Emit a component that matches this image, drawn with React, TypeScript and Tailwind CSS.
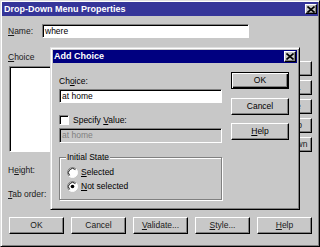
import React from "react";

const raised =
  "bg-[#c8c8c8] border border-t-white border-l-white border-r-black border-b-black shadow-[inset_-1px_-1px_0_#808080]";
const sunken =
  "border border-t-[#808080] border-l-[#808080] border-r-white border-b-white shadow-[inset_1px_1px_0_#000]";

function CloseX() {
  return (
    <svg width="8" height="7" viewBox="0 0 8 7">
      <path d="M0.5 0.5 L7.5 6.5 M7.5 0.5 L0.5 6.5" stroke="#000" strokeWidth="1.6" fill="none" />
    </svg>
  );
}

function Radio({ checked }: { checked?: boolean }) {
  return (
    <svg width="11" height="11" viewBox="0 0 12 12" className="shrink-0">
      <circle cx="6" cy="6" r="5.5" fill="#fff" />
      <path d="M2.11 9.89 A5.5 5.5 0 0 1 9.89 2.11" stroke="#808080" fill="none" />
      <path d="M9.89 2.11 A5.5 5.5 0 0 1 2.11 9.89" stroke="#fff" fill="none" />
      <path d="M2.82 9.18 A4.5 4.5 0 0 1 9.18 2.82" stroke="#000" fill="none" />
      {checked && <circle cx="6" cy="6" r="2" fill="#000" />}
    </svg>
  );
}

function Btn({ children, className = "" }: { children?: React.ReactNode; className?: string }) {
  return (
    <div className={`${raised} flex items-center justify-center text-[8.5px] leading-none whitespace-nowrap text-[#1a1a1a] ${className}`}>
      {children}
    </div>
  );
}

export default function App() {
  return (
    <div className="relative w-[320px] h-[247px] overflow-hidden font-['Liberation_Sans',Arial,sans-serif] text-black">
      {/* Outer window */}
      <div className="w-[320px] h-[247px] flex flex-col bg-[#c8c8c8] border border-t-[#dfdfdf] border-l-[#dfdfdf] border-r-black border-b-black shadow-[inset_1px_1px_0_#fff,inset_-1px_-1px_0_#808080] p-px">
        <div className="h-[14px] bg-[#353599] flex items-center justify-between pl-[2px] pr-[1px] shrink-0">
          <span className="text-white font-bold text-[9px] leading-none">Drop-Down Menu Properties</span>
          <div className={`${raised} w-[12px] h-[10px] flex items-center justify-center`}>
            <CloseX />
          </div>
        </div>
        <div className="flex flex-col px-[6px]">
          <div className="mt-[8px] flex items-center h-[14px]">
            <span className="w-[34px] text-[8.5px] leading-none text-[#1a1a1a]">
              <u>N</u>ame:
            </span>
            <div className={`${sunken} bg-white w-[207px] h-[14px] flex items-center pl-[2px] text-[8.5px] leading-none`}>
              where
            </div>
          </div>
          <div className="mt-[14px] flex h-[100px]">
            <div className="flex flex-col w-[240px]">
              <span className="h-[10px] text-[8.5px] leading-[10px] text-[#1a1a1a]">
                <u>C</u>hoice
              </span>
              <div className={`${sunken} bg-white mt-[4px] ml-px h-[86px]`} />
            </div>
            <div className="ml-auto pt-[9px] flex flex-col gap-[4px]">
              <Btn className="w-[54px] h-[15.5px]">Add...</Btn>
              <Btn className="w-[54px] h-[15.5px]">Modify...</Btn>
              <Btn className="w-[54px] h-[15.5px]">Remove</Btn>
              <Btn className="w-[54px] h-[15.5px]">Move Up</Btn>
              <Btn className="w-[54px] h-[15.5px]">Move Down</Btn>
            </div>
          </div>
          <div className="mt-[13px] h-[10px] flex items-center">
            <span className="text-[8.5px] leading-none text-[#1a1a1a]">
              H<u>e</u>ight:
            </span>
          </div>
          <div className="mt-[14px] h-[10px] flex items-center">
            <span className="text-[8.5px] leading-none text-[#1a1a1a]">
              <u>T</u>ab order:
            </span>
          </div>
          <div className="mt-[18px] flex gap-[7px] pl-px">
            <Btn className="w-[55px] h-[17px]">OK</Btn>
            <Btn className="w-[55px] h-[17px]">Cancel</Btn>
            <Btn className="w-[55px] h-[17px]">
              <span>
                <u>V</u>alidate...
              </span>
            </Btn>
            <Btn className="w-[55px] h-[17px]">
              <span>
                <u>S</u>tyle...
              </span>
            </Btn>
            <Btn className="w-[55px] h-[17px]">
              <span>
                <u>H</u>elp
              </span>
            </Btn>
          </div>
        </div>
      </div>

      {/* Add Choice dialog overlay */}
      <div className="absolute left-[50px] top-[47px] w-[250px] h-[163px] flex flex-col bg-[#c8c8c8] border border-t-[#dfdfdf] border-l-[#dfdfdf] border-r-black border-b-black shadow-[inset_1px_1px_0_#fff,inset_-1px_-1px_0_#808080] p-[2px]">
        <div className="h-[13px] bg-[#000080] flex items-center justify-between pl-px pr-px shrink-0">
          <span className="text-white font-bold text-[9px] leading-none">Add Choice</span>
          <div className={`${raised} w-[12px] h-[11px] flex items-center justify-center`}>
            <CloseX />
          </div>
        </div>
        <div className="flex pl-[6px]">
          <div className="flex flex-col w-[163px] pt-[13px]">
            <span className="h-[10px] text-[8.5px] leading-[10px]">
              Ch<u>o</u>ice:
            </span>
            <div className={`${sunken} bg-white mt-[3px] h-[14px] flex items-center pl-[2px] text-[8.5px] leading-none`}>
              at home
            </div>
            <div className="mt-[12px] h-[10px] flex items-center gap-[4px]">
              <div className={`${sunken} bg-white w-[10px] h-[10px] shrink-0`} />
              <span className="text-[8.5px] leading-none">
                Specify <u>V</u>alue:
              </span>
            </div>
            <div className={`${sunken} mt-[3px] h-[15px] flex items-center pl-[2px] text-[8.5px] leading-none text-[#808080]`}>
              at home
            </div>
            <div className="relative mt-[14px] h-[43px] border border-[#808080] shadow-[1px_1px_0_#fff,inset_1px_1px_0_#fff]">
              <span className="absolute left-[6px] top-[-6px] px-px bg-[#c8c8c8] text-[8.5px] leading-[10px]">
                Initial State
              </span>
              <div className="flex flex-col pt-[9px] pl-[7px] gap-[4px]">
                <div className="h-[10px] flex items-center gap-[3px]">
                  <Radio />
                  <span className="text-[8.5px] leading-none">
                    <u>S</u>elected
                  </span>
                </div>
                <div className="h-[10px] flex items-center gap-[3px]">
                  <Radio checked />
                  <span className="text-[8.5px] leading-none">
                    <u>N</u>ot selected
                  </span>
                </div>
              </div>
            </div>
          </div>
          <div className="ml-[9px] w-[58px] pt-[9px] flex flex-col">
            <div className="h-[17px] border border-black bg-[#c8c8c8] shadow-[inset_1px_1px_0_#fff,inset_-1px_-1px_0_#000,inset_-2px_-2px_0_#808080] flex items-center justify-center text-[8.5px] leading-none">
              OK
            </div>
            <Btn className="mt-[9px] h-[17px] !text-black">Cancel</Btn>
            <Btn className="mt-[8px] h-[17px] !text-black">
              <span>
                <u>H</u>elp
              </span>
            </Btn>
          </div>
        </div>
      </div>
    </div>
  );
}
